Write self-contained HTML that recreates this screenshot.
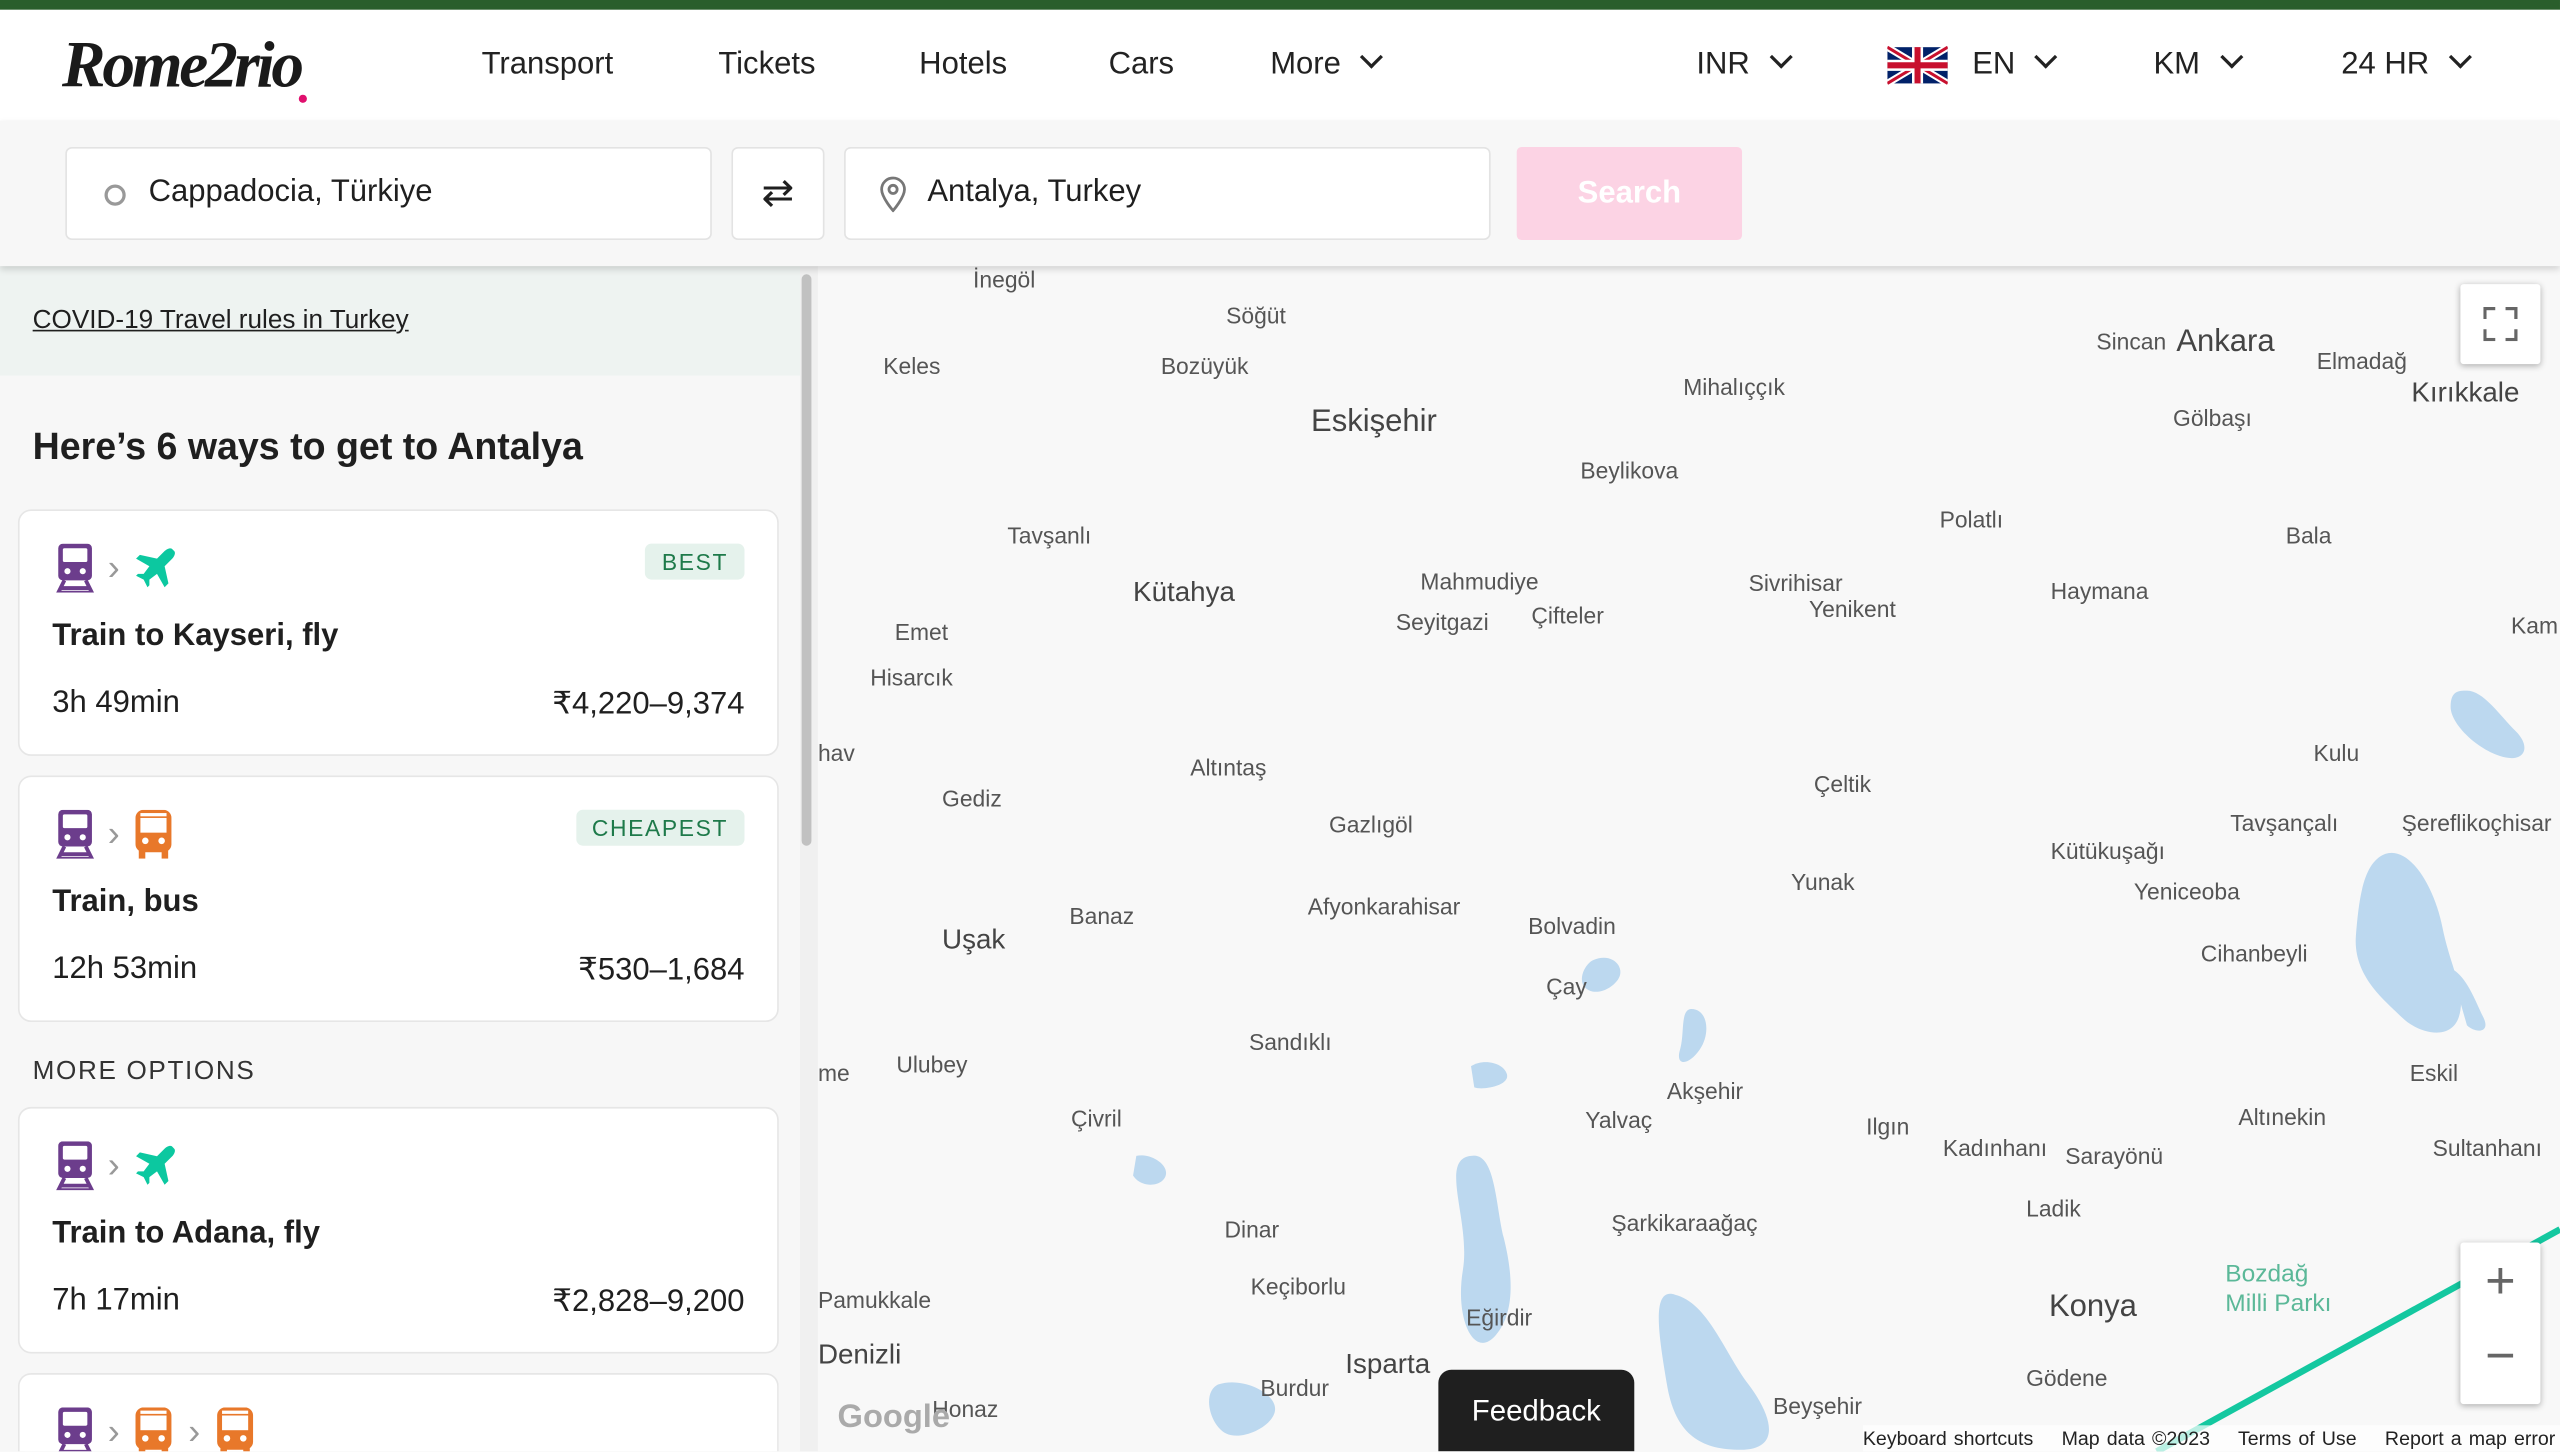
<!DOCTYPE html>
<html><head><meta charset="utf-8"><style>
*{box-sizing:border-box;margin:0;padding:0}
html,body{width:2560px;height:1452px;overflow:hidden;background:#f8f8f8}
#outer{position:relative;width:2560px;height:1452px;overflow:hidden}
#w{position:absolute;left:0;top:0;width:1568px;height:889px;overflow:hidden;transform:scale(1.63265);transform-origin:0 0;font-family:"Liberation Sans",sans-serif;color:#1f1f1f;background:#f8f8f8}
.abs{position:absolute}
.top{left:0;top:0;width:1568px;height:6px;background:#2a5e2c}
.hdr{left:0;top:6px;width:1568px;height:68px;background:#fff}
.nav{font-size:19px;top:29px;color:#222}
.chev{display:inline-block;width:10px;height:10px;border-right:2px solid #222;border-bottom:2px solid #222;transform:rotate(45deg);margin-left:14px;position:relative;top:-5px}
.sb{left:0;top:74px;width:1568px;height:89px;background:#f7f7f7;box-shadow:0 2px 4px rgba(0,0,0,.15);z-index:3}
.inp{position:absolute;top:16px;height:57px;background:#fff;border:1px solid #e3e3e3;border-radius:4px;font-size:19px;padding:16px 0 0 50px}
.left{left:0;top:163px;width:490px;height:726px;background:#f7f7f7}
.card{position:absolute;left:11px;width:466px;height:151px;background:#fff;border:1px solid #e6e6e6;border-radius:8px}
.card .t{position:absolute;left:20px;top:66px;font-size:19px;font-weight:bold}
.card .d{position:absolute;left:20px;top:107px;font-size:19px}
.card .p{position:absolute;right:20px;top:107px;font-size:19px}
.badge{position:absolute;right:20px;top:20px;background:#e5f2ec;color:#1e7a4a;font-size:14px;letter-spacing:1px;padding:3px 10px;border-radius:4px}
.ic{position:absolute;top:20px;left:22px;display:flex;align-items:center;gap:8px}
.gt{color:#999;font-size:22px}
.map{left:501px;top:163px;width:1067px;height:726px;background:#f8f8f8;overflow:hidden}
.l{position:absolute;font-size:14px;color:#555;white-space:nowrap}
.L{position:absolute;font-size:19px;color:#444;white-space:nowrap}
</style></head><body><div id="outer"><div id="w">
<div class="abs top"></div>
<div class="abs hdr">
<div class="abs" style="left:38px;top:10px;font-family:'Liberation Serif',serif;font-style:italic;font-weight:bold;font-size:40px;letter-spacing:-2px;color:#1a1a1a">Rome2rio</div>
<div class="abs" style="left:183px;top:52px;width:5px;height:5px;border-radius:50%;background:#e0106e"></div>
</div>
<div class="abs nav" style="left:295px">Transport</div>
<div class="abs nav" style="left:440px">Tickets</div>
<div class="abs nav" style="left:563px">Hotels</div>
<div class="abs nav" style="left:679px">Cars</div>
<div class="abs nav" style="left:778px">More<span class="chev"></span></div>
<div class="abs nav" style="left:1039px">INR<span class="chev"></span></div>
<svg class="abs" style="left:1156px;top:28px" width="37" height="24" viewBox="0 0 60 36"><rect width="60" height="36" fill="#012169"/><path d="M0,0 60,36M60,0 0,36" stroke="#fff" stroke-width="7"/><path d="M0,0 60,36M60,0 0,36" stroke="#C8102E" stroke-width="3"/><path d="M30,0v36M0,18h60" stroke="#fff" stroke-width="11"/><path d="M30,0v36M0,18h60" stroke="#C8102E" stroke-width="6"/></svg>
<div class="abs nav" style="left:1208px">EN<span class="chev"></span></div>
<div class="abs nav" style="left:1319px">KM<span class="chev"></span></div>
<div class="abs nav" style="left:1434px">24 HR<span class="chev"></span></div>
<div class="abs sb">
<div class="inp" style="left:40px;width:396px"><span style="position:absolute;left:23px;top:22px;width:13px;height:13px;border:2px solid #999;border-radius:50%"></span>Cappadocia, Türkiye</div>
<div class="inp" style="left:448px;width:57px;padding:0;text-align:center;line-height:55px;font-size:24px">⇄</div>
<div class="inp" style="left:517px;width:396px"><svg style="position:absolute;left:20px;top:17px" width="18" height="22" viewBox="0 0 18 22"><path d="M9 21C9 21 2 13 2 8a7 7 0 0114 0c0 5-7 13-7 13z" fill="none" stroke="#777" stroke-width="1.7"/><circle cx="9" cy="8" r="2.5" fill="none" stroke="#777" stroke-width="1.7"/></svg>Antalya, Turkey</div>
<div style="position:absolute;left:929px;top:16px;width:138px;height:57px;background:#fcd3e4;border-radius:3px;color:#fff;font-size:19px;font-weight:bold;text-align:center;line-height:57px">Search</div>
</div>
<div class="abs left">
<div style="height:67px;background:#eef3f1;padding:25px 20px;font-size:16px;text-decoration:underline">COVID-19 Travel rules in Turkey</div>
<div style="position:absolute;left:20px;top:97px;font-size:23px;font-weight:bold">Here’s 6 ways to get to Antalya</div>
</div>
<div class="abs" style="left:490px;top:163px;width:11px;height:726px;background:#f0f0f0"><div style="margin:5px 0 0 1px;width:6px;height:350px;background:#c1c1c1;border-radius:3px"></div></div>
<svg width="0" height="0" style="position:absolute"><defs>
<symbol id="tr" viewBox="0 0 24 32"><path d="M4 0h16a3 3 0 013 3v18a3 3 0 01-3 3H4a3 3 0 01-3-3V3a3 3 0 013-3z" fill="#6c3d8c"/><rect x="4" y="3" width="16" height="9" rx="1" fill="#fff"/><circle cx="7" cy="18" r="2" fill="#fff"/><circle cx="17" cy="18" r="2" fill="#fff"/><path d="M5 24 1 32h22l-4-8M3 29h18" fill="none" stroke="#6c3d8c" stroke-width="2.5"/></symbol>
<symbol id="pl" viewBox="0 0 24 24"><path d="M21 2c-1-1-3 0-4 1l-4 4-9-2-2 2 7 4-3 4H3l-1 1 4 2 2 4 1-1v-3l4-3 4 7 2-2-2-9 4-4c1-1 2-3 1-4z" fill="#0cc8a0"/></symbol>
<symbol id="bu" viewBox="0 0 24 30"><rect x="1" y="0" width="22" height="26" rx="5" fill="#e8782a"/><rect x="4" y="5" width="16" height="9" fill="#fff"/><rect x="4" y="2" width="16" height="2" fill="#fff"/><circle cx="7" cy="19" r="2" fill="#fff"/><circle cx="17" cy="19" r="2" fill="#fff"/><rect x="3" y="25" width="4" height="5" fill="#e8782a"/><rect x="17" y="25" width="4" height="5" fill="#e8782a"/></symbol>
</defs></svg>
<div class="card" style="top:312px"><div class="ic"><svg width="24" height="30"><use href="#tr"/></svg><span class="gt">›</span><svg width="28" height="28"><use href="#pl"/></svg></div><div class="badge">BEST</div><div class="t">Train to Kayseri, fly</div><div class="d">3h 49min</div><div class="p">₹4,220–9,374</div></div>
<div class="card" style="top:475px"><div class="ic"><svg width="24" height="30"><use href="#tr"/></svg><span class="gt">›</span><svg width="26" height="30"><use href="#bu"/></svg></div><div class="badge">CHEAPEST</div><div class="t">Train, bus</div><div class="d">12h 53min</div><div class="p">₹530–1,684</div></div>
<div class="abs" style="left:20px;top:648px;font-size:16px;letter-spacing:1px;color:#333">MORE OPTIONS</div>
<div class="card" style="top:678px"><div class="ic"><svg width="24" height="30"><use href="#tr"/></svg><span class="gt">›</span><svg width="28" height="28"><use href="#pl"/></svg></div><div class="t">Train to Adana, fly</div><div class="d">7h 17min</div><div class="p">₹2,828–9,200</div></div>
<div class="card" style="top:841px;height:48px;border-bottom:none;border-radius:8px 8px 0 0;overflow:hidden"><div class="ic"><svg width="24" height="30"><use href="#tr"/></svg><span class="gt">›</span><svg width="26" height="30"><use href="#bu"/></svg><span class="gt">›</span><svg width="26" height="30"><use href="#bu"/></svg></div></div>
<div class="abs map">
<svg style="position:absolute;left:0;top:0" width="1067" height="726">
<g fill="#bcd8ef">
<path d="M960 360c15-5 30 20 35 45s15 40 10 55-25 10-35 0-30-25-28-50 5-45 18-50z"/>
<path d="M1010 260c10 0 20 15 30 25s5 20-10 15-30-20-30-30 5-10 10-10z"/>
<path d="M400 545c15-3 15 30 20 50s8 45-5 60-25-10-20-40-15-68 5-70z"/>
<path d="M525 630c20 5 30 35 45 55s20 40-5 40-40-10-45-40-10-60 5-55z"/>
<path d="M535 455c10 0 12 15 5 25s-15 10-12 0 0-25 7-25z"/>
<path d="M475 425c12-5 20 5 15 12s-15 10-20 5 0-15 5-17z"/>
<path d="M245 685c15-5 35 5 35 15s-20 20-30 15-15-25-5-30z"/>
<path d="M195 545c8-2 20 5 18 12s-15 8-20 0z"/>
<path d="M400 490c8-5 20-2 22 5s-15 10-20 8z"/>
<path d="M1000 430c10 5 15 20 20 30s-5 10-10 5z"/>
</g>
<path d="M820 726 1067 590" stroke="#14c8a0" stroke-width="4"/>
</svg>
<div class="l" style="left:95px;top:0">İnegöl</div>
<div class="l" style="left:250px;top:22px">Söğüt</div>
<div class="l" style="left:40px;top:53px">Keles</div>
<div class="l" style="left:210px;top:53px">Bozüyük</div>
<div class="L" style="left:302px;top:85px">Eskişehir</div>
<div class="l" style="left:530px;top:66px">Mihalıççık</div>
<div class="l" style="left:783px;top:38px">Sincan</div>
<div class="L" style="left:832px;top:36px">Ankara</div>
<div class="l" style="left:918px;top:50px">Elmadağ</div>
<div class="L" style="left:976px;top:68px;font-size:17px">Kırıkkale</div>
<div class="l" style="left:830px;top:85px">Gölbaşı</div>
<div class="l" style="left:467px;top:117px">Beylikova</div>
<div class="l" style="left:116px;top:157px">Tavşanlı</div>
<div class="l" style="left:687px;top:147px">Polatlı</div>
<div class="l" style="left:899px;top:157px">Bala</div>
<div class="L" style="left:193px;top:190px;font-size:17px">Kütahya</div>
<div class="l" style="left:369px;top:185px">Mahmudiye</div>
<div class="l" style="left:570px;top:186px">Sivrihisar</div>
<div class="l" style="left:354px;top:210px">Seyitgazi</div>
<div class="l" style="left:437px;top:206px">Çifteler</div>
<div class="l" style="left:607px;top:202px">Yenikent</div>
<div class="l" style="left:755px;top:191px">Haymana</div>
<div class="l" style="left:1037px;top:212px">Kam</div>
<div class="l" style="left:47px;top:216px">Emet</div>
<div class="l" style="left:32px;top:244px">Hisarcık</div>
<div class="l" style="left:0;top:290px">hav</div>
<div class="l" style="left:228px;top:299px">Altıntaş</div>
<div class="l" style="left:916px;top:290px">Kulu</div>
<div class="l" style="left:76px;top:318px">Gediz</div>
<div class="l" style="left:610px;top:309px">Çeltik</div>
<div class="l" style="left:313px;top:334px">Gazlıgöl</div>
<div class="l" style="left:865px;top:333px">Tavşançalı</div>
<div class="l" style="left:970px;top:333px">Şereflikoçhisar</div>
<div class="l" style="left:755px;top:350px">Kütükuşağı</div>
<div class="l" style="left:596px;top:369px">Yunak</div>
<div class="l" style="left:806px;top:375px">Yeniceoba</div>
<div class="l" style="left:300px;top:384px">Afyonkarahisar</div>
<div class="l" style="left:154px;top:390px">Banaz</div>
<div class="l" style="left:435px;top:396px">Bolvadin</div>
<div class="L" style="left:76px;top:403px;font-size:17px">Uşak</div>
<div class="l" style="left:847px;top:413px">Cihanbeyli</div>
<div class="l" style="left:446px;top:433px">Çay</div>
<div class="l" style="left:264px;top:467px">Sandıklı</div>
<div class="l" style="left:48px;top:481px">Ulubey</div>
<div class="l" style="left:0;top:486px">me</div>
<div class="l" style="left:975px;top:486px">Eskil</div>
<div class="l" style="left:520px;top:497px">Akşehir</div>
<div class="l" style="left:155px;top:514px">Çivril</div>
<div class="l" style="left:470px;top:515px">Yalvaç</div>
<div class="l" style="left:642px;top:519px">Ilgın</div>
<div class="l" style="left:870px;top:513px">Altınekin</div>
<div class="l" style="left:689px;top:532px">Kadınhanı</div>
<div class="l" style="left:764px;top:537px">Sarayönü</div>
<div class="l" style="left:989px;top:532px">Sultanhanı</div>
<div class="l" style="left:740px;top:569px">Ladik</div>
<div class="l" style="left:486px;top:578px">Şarkikaraağaç</div>
<div class="l" style="left:249px;top:582px">Dinar</div>
<div class="l" style="left:862px;top:609px;color:#5bb898;font-size:15px">Bozdağ</div>
<div class="l" style="left:862px;top:627px;color:#5bb898;font-size:15px">Milli Parkı</div>
<div class="l" style="left:265px;top:617px">Keçiborlu</div>
<div class="l" style="left:0;top:625px">Pamukkale</div>
<div class="L" style="left:754px;top:627px">Konya</div>
<div class="l" style="left:397px;top:636px">Eğirdir</div>
<div class="L" style="left:0;top:657px;font-size:17px">Denizli</div>
<div class="L" style="left:323px;top:663px;font-size:17px">Isparta</div>
<div class="l" style="left:271px;top:679px">Burdur</div>
<div class="l" style="left:740px;top:673px">Gödene</div>
<div class="l" style="left:585px;top:690px">Beyşehir</div>
<div class="l" style="left:70px;top:692px">Honaz</div>
<div class="l" style="left:1017px;top:682px">Ka</div>
<div class="abs" style="left:1006px;top:11px;width:49px;height:49px;background:#fff;border-radius:2px;box-shadow:0 1px 4px rgba(0,0,0,.3)"><div style="position:absolute;left:14px;top:14px;width:21px;height:21px;border:2.5px solid #666;clip-path:polygon(0 0,35% 0,35% 100%,0 100%,0 65%,100% 65%,100% 100%,65% 100%,65% 0,100% 0,100% 35%,0 35%)"></div></div>
<div class="abs" style="left:1006px;top:598px;width:49px;height:99px;background:#fff;border-radius:2px;box-shadow:0 1px 4px rgba(0,0,0,.3);text-align:center;font-size:32px;color:#666;line-height:46px">+<br>−</div>
<div class="abs" style="left:380px;top:676px;width:120px;height:50px;background:#1f1f1f;border-radius:8px 8px 0 0;color:#fff;font-size:18px;text-align:center;line-height:50px">Feedback</div>
<div class="abs" style="left:12px;top:694px;font-size:20px;font-weight:bold;color:#aaa">Google</div>
<div class="abs" style="left:640px;top:710px;font-size:12px;color:#222;background:rgba(255,255,255,.7);width:427px;padding:1px 0;word-spacing:1px">Keyboard shortcuts &nbsp;&nbsp; Map data ©2023 &nbsp;&nbsp; Terms of Use &nbsp;&nbsp; Report a map error</div>
</div>
</div></div></body></html>
